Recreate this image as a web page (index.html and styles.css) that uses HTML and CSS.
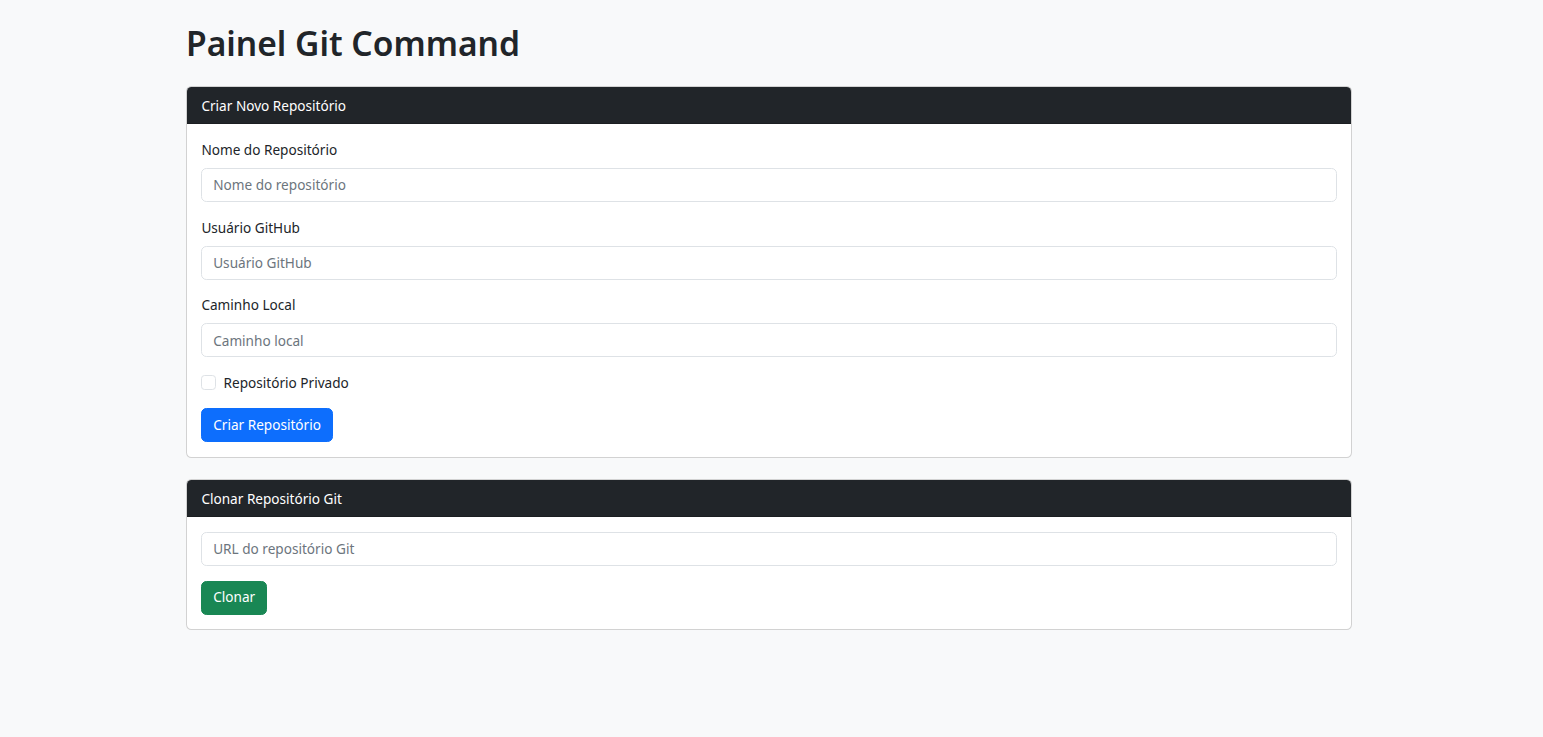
FILE: index.html
```html
<!DOCTYPE html>
<html lang="pt-BR">
<head>
<meta charset="utf-8">
<title>Painel Git Command</title>
<link rel="stylesheet" href="styles.css">
</head>
<body>
<main class="container">
  <h1 class="title">Painel Git Command</h1>

  <section class="card">
    <div class="card-header">Criar Novo Repositório</div>
    <div class="card-body">
      <div class="field">
        <label class="label">Nome do Repositório</label>
        <input class="input" type="text" placeholder="Nome do repositório">
      </div>
      <div class="field">
        <label class="label">Usuário GitHub</label>
        <input class="input" type="text" placeholder="Usuário GitHub">
      </div>
      <div class="field">
        <label class="label">Caminho Local</label>
        <input class="input" type="text" placeholder="Caminho local">
      </div>
      <div class="check">
        <span class="check-box"></span>
        <span class="check-label">Repositório Privado</span>
      </div>
      <div><button class="btn btn-primary">Criar Repositório</button></div>
    </div>
  </section>

  <section class="card">
    <div class="card-header">Clonar Repositório Git</div>
    <div class="card-body">
      <div class="field">
        <input class="input" type="text" placeholder="URL do repositório Git">
      </div>
      <div><button class="btn btn-success">Clonar</button></div>
    </div>
  </section>
</main>
</body>
</html>
```
FILE: styles.css
```css
html, body {
  margin: 0;
  padding: 0;
}
body {
  background: #f8f9fa;
  color: #212529;
  font-family: "Noto Sans", "Open Sans", sans-serif;
  font-size: 13.6px;
  line-height: 1.5;
}
.container {
  width: 1166px;
  margin: 0 auto;
  padding: 21.6px 5px 0 0;
}
.title {
  font-size: 33.6px;
  font-weight: 600;
  line-height: 43.2px;
  margin: 0 0 21.6px 0;
  letter-spacing: 0;
}
.card {
  background: #fff;
  border: 1px solid rgba(0,0,0,.175);
  border-radius: 5.4px;
  overflow: hidden;
  margin-bottom: 21.6px;
}
.card-header {
  background: #212529;
  color: #fff;
  padding: 7.2px 14.4px;
  line-height: 21.6px;
  border-bottom: 1px solid rgba(0,0,0,.175);
}
.card-body {
  padding: 14.4px;
}
.field {
  margin-bottom: 14.6px;
}
.label {
  display: block;
  line-height: 21.6px;
  margin-bottom: 7.4px;
}
.input {
  display: block;
  box-sizing: border-box;
  width: 100%;
  height: 34.2px;
  padding: 5.4px 10.8px;
  border: 1px solid #dee2e6;
  border-radius: 5.4px;
  font: inherit;
  color: #212529;
  background: #fff;
  outline: none;
}
.input::placeholder {
  color: #6c757d;
  opacity: 1;
}
.check {
  display: flex;
  align-items: center;
  gap: 7.2px;
  height: 21.8px;
  margin-bottom: 14.4px;
}
.check-box {
  width: 13px;
  height: 13px;
  border: 1px solid #dee2e6;
  border-radius: 3.6px;
  background: #fff;
}
.btn {
  display: inline-block;
  height: 34.2px;
  padding: 5.4px 10.8px;
  border: 1px solid transparent;
  border-radius: 5.4px;
  font: inherit;
  color: #fff;
  cursor: pointer;
}
.btn-primary {
  background: #0d6efd;
  border-color: #0d6efd;
}
.btn-success {
  background: #198754;
  border-color: #198754;
}
```
